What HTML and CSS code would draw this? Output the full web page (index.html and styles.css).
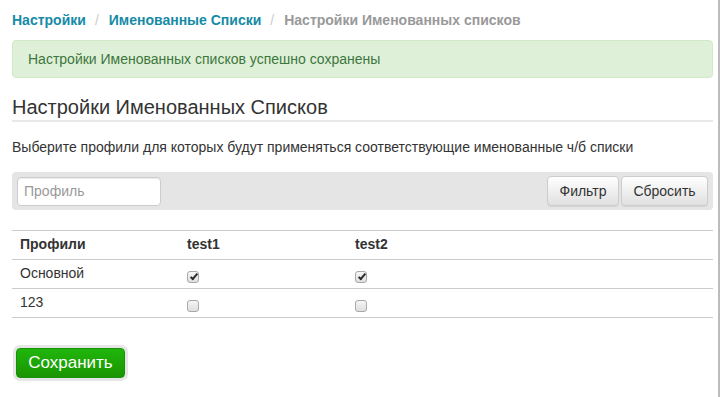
FILE: index.html
```html
<!DOCTYPE html>
<html lang="ru">
<head>
  <meta charset="UTF-8" />
  <meta name="viewport" content="width=device-width, initial-scale=1.0"/>
  <title>Настройки Именованных списков</title>
  <link rel="stylesheet" href="styles.css">
</head>
<body>
<div class="page">

  <ol class="breadcrumb">
    <li><a href="#">Настройки</a></li>
    <li><a href="#">Именованные Списки</a></li>
    <li class="active">Настройки Именованных списков</li>
  </ol>

  <div class="alert">Настройки Именованных списков успешно сохранены</div>

  <h3 class="title">Настройки Именованных Списков</h3>

  <p class="hint">Выберите профили для которых будут применяться соответствующие именованные ч/б списки</p>

  <form class="filter">
    <input type="text" class="filter-input" placeholder="Профиль" />
    <div class="filter-buttons">
      <button type="submit" class="btn btn-filter">Фильтр</button>
      <button type="reset" class="btn btn-reset">Сбросить</button>
    </div>
  </form>

  <form class="lists">
    <table class="grid">
      <thead>
        <tr>
          <th class="col-name">Профили</th>
          <th class="col-list">test1</th>
          <th>test2</th>
        </tr>
      </thead>
      <tbody>
        <tr>
          <td>Основной</td>
          <td><input type="checkbox" class="check" checked /></td>
          <td><input type="checkbox" class="check" checked /></td>
        </tr>
        <tr>
          <td>123</td>
          <td><input type="checkbox" class="check" /></td>
          <td><input type="checkbox" class="check" /></td>
        </tr>
      </tbody>
    </table>

    <button type="submit" class="btn-save">Сохранить</button>
  </form>

</div>
</body>
</html>
```

FILE: styles.css
```css
html, body {
  margin: 0;
  height: 100%;
}
body {
  font-family: "Liberation Sans", Arial, sans-serif;
  font-size: 14px;
  line-height: 20px;
  color: #333;
  background: #fff;
}
.page {
  box-sizing: border-box;
  min-height: 100%;
  padding: 10px 5px 0 12px;
  border-right: 2px solid #bcbcbc;
}
.breadcrumb {
  list-style: none;
  margin: 0;
  padding: 0;
  display: flex;
  font-weight: bold;
}
.breadcrumb li + li:before {
  content: "/";
  color: #ccc;
  padding: 0 10px 0 9px;
  font-weight: normal;
}
.breadcrumb a {
  color: #168aa6;
  text-decoration: none;
}
.breadcrumb .active {
  color: #999;
}
.alert {
  margin-top: 10px;
  padding: 8px 15px;
  background: #dff0d8;
  border: 1px solid #d0e9c6;
  border-radius: 4px;
  color: #3c763d;
}
.title {
  margin: 17px 0 0;
  padding-bottom: 1px;
  font-size: 20px;
  line-height: 24px;
  font-weight: normal;
  border-bottom: 2px solid #e8e8e8;
}
.hint {
  margin: 15px 0 0;
}
.filter {
  margin-top: 15px;
  display: flex;
  align-items: center;
  justify-content: space-between;
  padding: 4px 5px;
  background: #e5e5e5;
  border-radius: 4px;
}
.filter-input {
  box-sizing: border-box;
  width: 144px;
  height: 29px;
  padding: 4px 6px;
  font-family: inherit;
  font-size: 14px;
  color: #555;
  background: #fff;
  border: 1px solid #ccc;
  border-radius: 4px;
  box-shadow: inset 0 1px 1px rgba(0,0,0,0.075);
}
.filter-input::placeholder {
  color: #999;
}
.filter-buttons {
  display: flex;
  gap: 2px;
}
.btn {
  height: 30px;
  padding: 0;
  font-family: inherit;
  font-size: 14px;
  color: #333;
  background: linear-gradient(#fff, #e0e0e0);
  border: 1px solid #ccc;
  border-radius: 4px;
  box-shadow: inset 0 1px 0 rgba(255,255,255,0.15), 0 1px 1px rgba(0,0,0,0.075);
  cursor: pointer;
}
.btn-filter {
  width: 72px;
}
.btn-reset {
  width: 87px;
}
.lists {
  margin-top: 20px;
}
.grid {
  width: 100%;
  border-collapse: collapse;
  border-top: 1px solid #cbcbcb;
}
.grid th,
.grid td {
  text-align: left;
  padding: 3px 8px 5px;
  border-bottom: 1px solid #cbcbcb;
  vertical-align: top;
}
.col-name {
  width: 151px;
}
.col-list {
  width: 152px;
}
.check {
  appearance: none;
  -webkit-appearance: none;
  box-sizing: border-box;
  position: relative;
  width: 12px;
  height: 12px;
  margin: 8px 0 0;
  display: block;
  border: 1px solid #a9a9a9;
  border-radius: 3px;
  background: linear-gradient(#f6f6f6, #dedede);
}
.check:checked:after {
  content: "";
  position: absolute;
  left: 4px;
  top: 0;
  width: 2px;
  height: 6px;
  border-right: 2px solid #2a2a2a;
  border-bottom: 2px solid #2a2a2a;
  transform: rotate(40deg);
}
.btn-save {
  margin: 30px 0 0 4px;
  width: 109px;
  height: 30px;
  font-family: inherit;
  font-size: 17px;
  color: #fff;
  background: linear-gradient(#20b60c, #1a9501);
  border: 1px solid #18900a;
  border-radius: 4px;
  box-shadow: 0 0 0 3px #e6e6e6;
  cursor: pointer;
}
```
